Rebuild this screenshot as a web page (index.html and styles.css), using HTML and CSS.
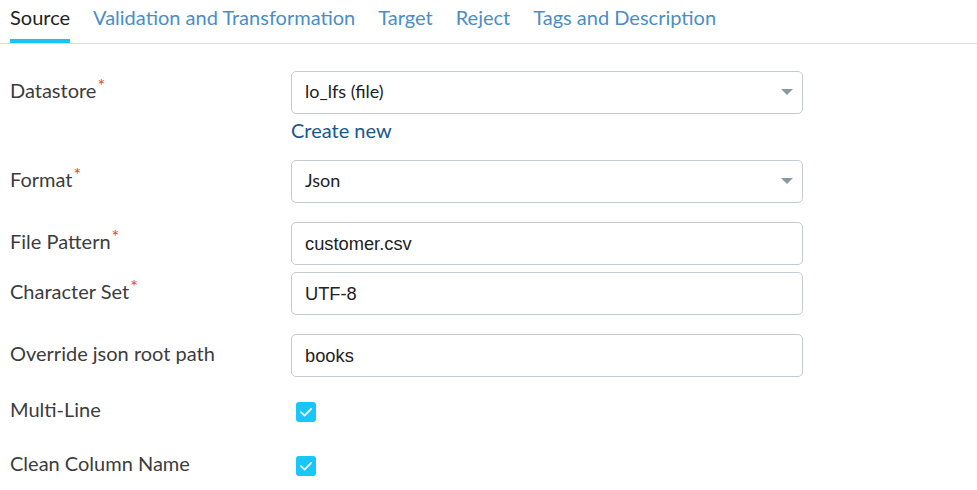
FILE: index.html
```html
<!DOCTYPE html>
<html>
<head>
<meta charset="utf-8">
<link rel="stylesheet" href="styles.css">
</head>
<body>
<nav class="tabs">
  <span class="tab active">Source</span>
  <span class="tab">Validation and Transformation</span>
  <span class="tab">Target</span>
  <span class="tab">Reject</span>
  <span class="tab">Tags and Description</span>
</nav>
<form class="form">
  <div class="row row-datastore">
    <label class="label">Datastore<span class="req">*</span></label>
    <div class="field">
      <div class="select"><span>lo_lfs (file)</span><i class="caret"></i></div>
      <a class="create">Create new</a>
    </div>
  </div>
  <div class="row row-format">
    <label class="label">Format<span class="req">*</span></label>
    <div class="field">
      <div class="select"><span>Json</span><i class="caret"></i></div>
    </div>
  </div>
  <div class="row row-pattern">
    <label class="label">File Pattern<span class="req">*</span></label>
    <div class="field"><div class="input">customer.csv</div></div>
  </div>
  <div class="row row-charset">
    <label class="label">Character Set<span class="req">*</span></label>
    <div class="field"><div class="input">UTF-8</div></div>
  </div>
  <div class="row row-override">
    <label class="label">Override json root path</label>
    <div class="field"><div class="input">books</div></div>
  </div>
  <div class="row check-row row-multi">
    <label class="label">Multi-Line</label>
    <div class="field"><span class="checkbox"><svg viewBox="0 0 20 20" width="20" height="20"><path d="M5 10.2 L8.6 13.6 L15.2 6.8" fill="none" stroke="#fff" stroke-width="1.7" stroke-linecap="round" stroke-linejoin="round"/></svg></span></div>
  </div>
  <div class="row check-row row-clean">
    <label class="label">Clean Column Name</label>
    <div class="field"><span class="checkbox"><svg viewBox="0 0 20 20" width="20" height="20"><path d="M5 10.2 L8.6 13.6 L15.2 6.8" fill="none" stroke="#fff" stroke-width="1.7" stroke-linecap="round" stroke-linejoin="round"/></svg></span></div>
  </div>
</form>
</body>
</html>
```

FILE: styles.css
```css
* { box-sizing: border-box; }
body {
  margin: 0;
  background: #fff;
  font-family: Lato, "Open Sans", sans-serif;
  color: #333;
}
.tabs {
  display: flex;
  gap: 23px;
  padding: 0 10px;
  border-bottom: 1px solid #dcdcdc;
}
.tab {
  font-size: 20px;
  line-height: 24px;
  padding-top: 5px;
  padding-bottom: 10px;
  border-bottom: 4px solid transparent;
  color: #4a8ec6;
  white-space: nowrap;
}
.tab.active {
  color: #222;
  border-bottom-color: #19c3f8;
}
.form {
  padding: 27px 10px 0 10px;
}
.row {
  display: grid;
  grid-template-columns: 281px 512px;
}
.label {
  display: block;
  height: 43px;
  font-size: 20px;
  line-height: 39px;
  color: #3c3c3c;
}
.req {
  color: #e8413c;
  font-size: 18px;
  line-height: 0;
  position: relative;
  top: -6px;
  margin-left: 1px;
}
.select, .input {
  height: 43px;
  border: 1px solid #c5cad3;
  border-radius: 5px;
  padding: 0 13px;
  display: flex;
  align-items: center;
  font-size: 18px;
  color: #222;
}
.select {
  justify-content: space-between;
  font-family: Lato, sans-serif;
  padding-bottom: 3px;
}
.input {
  font-family: "Liberation Sans", Arial, sans-serif;
  font-size: 18.3px;
}
.caret {
  width: 0;
  height: 0;
  border-left: 6px solid transparent;
  border-right: 6px solid transparent;
  border-top: 6px solid #8b97a8;
  margin-right: -4px;
  margin-top: 2px;
}
.create {
  display: block;
  margin-top: 4px;
  font-size: 20px;
  line-height: 24px;
  color: #17598c;
}
.row-datastore { margin-bottom: 18px; }
.row-format { margin-bottom: 19px; }
.row-pattern { margin-bottom: 7px; }
.row-charset { margin-bottom: 19px; }
.row-override { margin-bottom: 21px; }
.row-multi { margin-bottom: 30px; }
.check-row .label { height: 24px; line-height: 22px; }
.checkbox {
  display: block;
  width: 20px;
  height: 20px;
  margin-top: 4px;
  margin-left: 5px;
  background: #19c6fb;
  border-radius: 3px;
}
.checkbox svg { display: block; }
```
